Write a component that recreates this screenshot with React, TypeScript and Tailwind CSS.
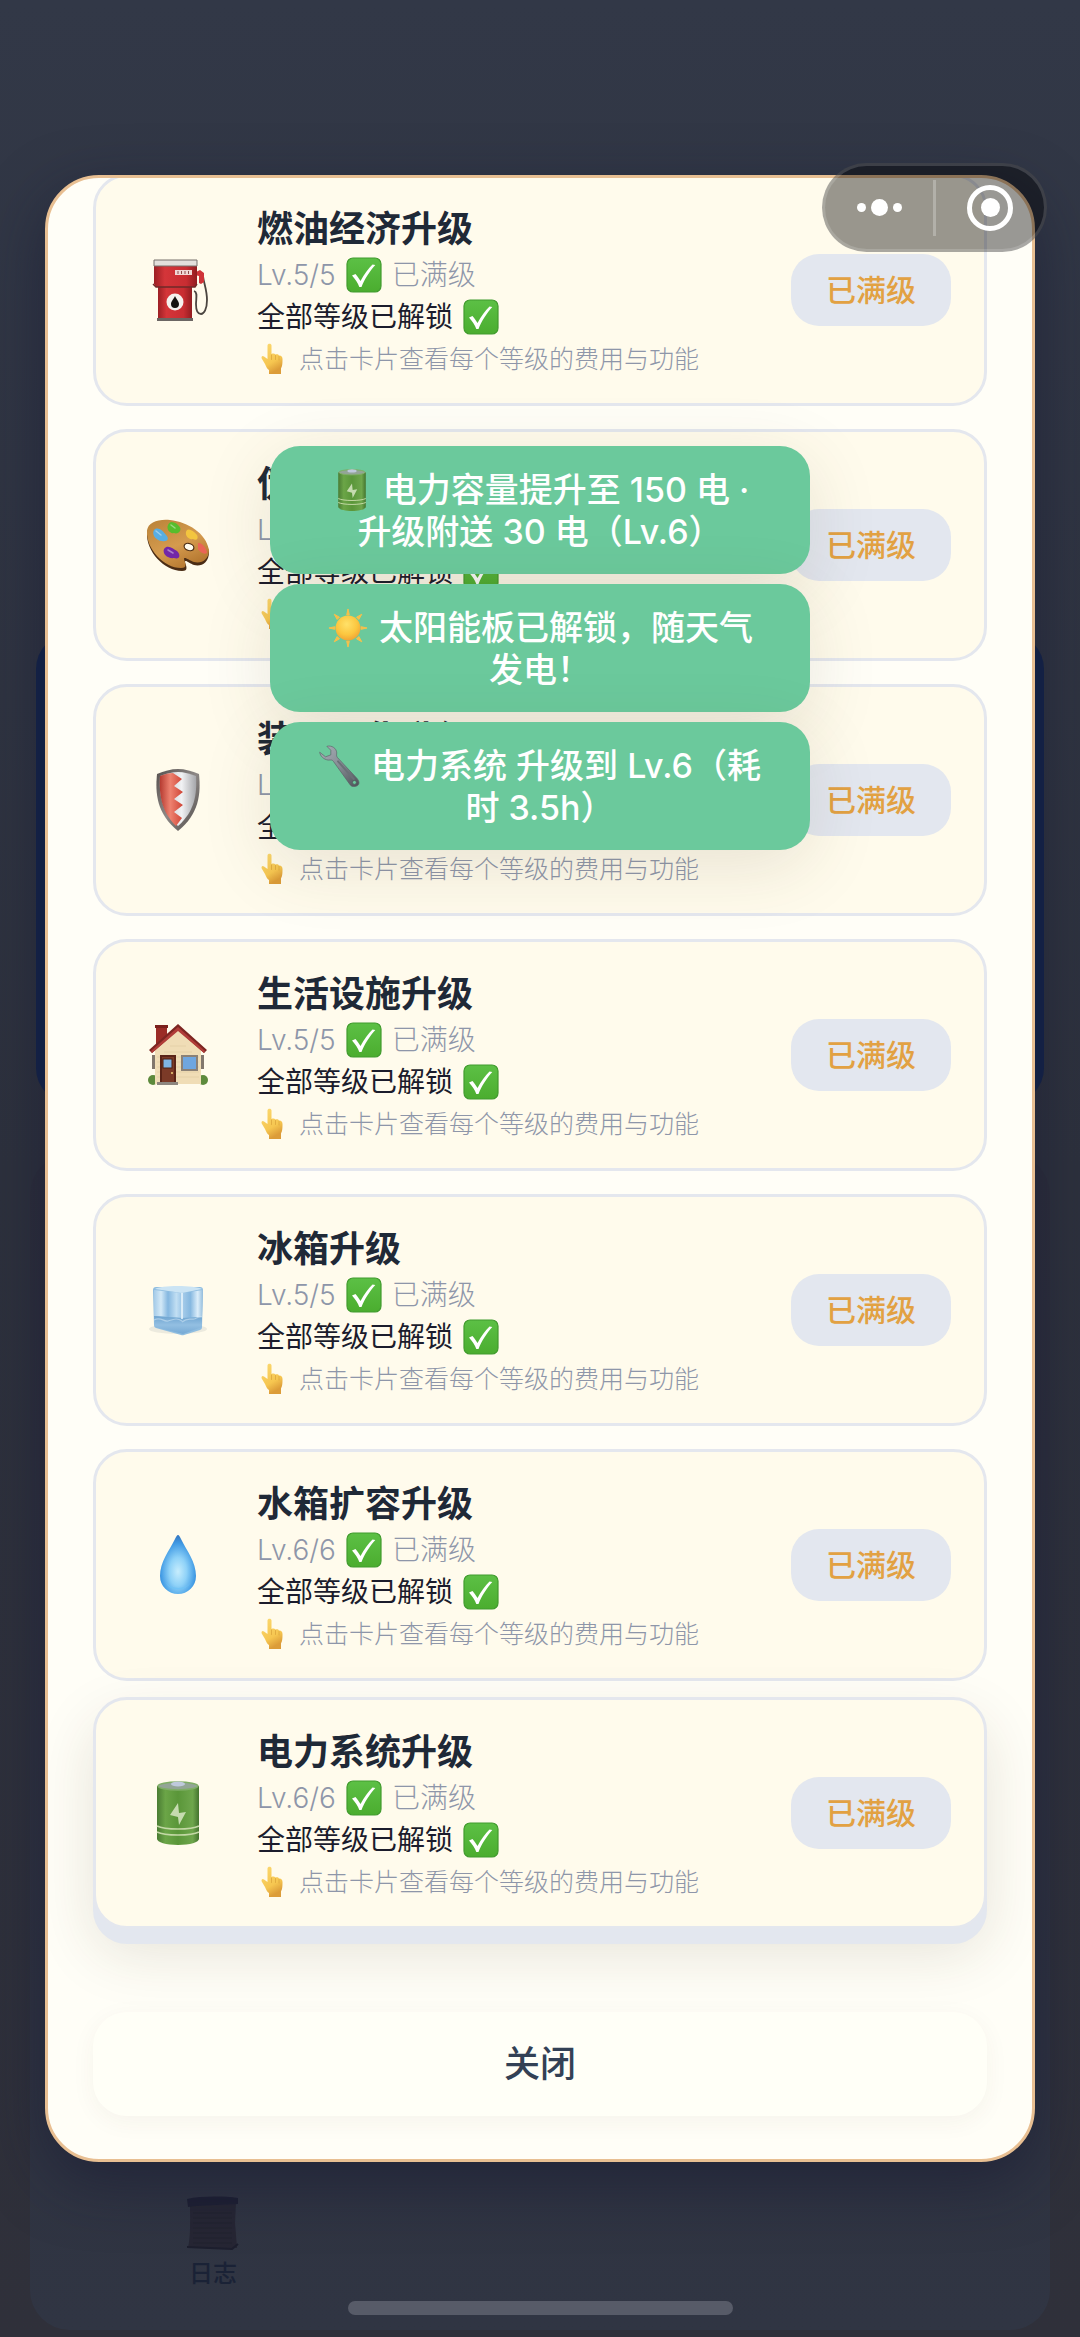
import React from 'react';

type IconProps = { className?: string };

type Upgrade = {
  title: string;
  level: string;
  icon: React.ComponentType<IconProps>;
  pressed?: boolean;
};

type Toast = {
  id: string;
  icon: React.ComponentType<IconProps>;
  lines: [string, string];
};

function FuelIcon({ className }: IconProps) {
  return (
    <svg viewBox="0 0 64 64" className={className} aria-hidden="true">
      <defs>
        <linearGradient id="fuelBody" x1="0" x2="1">
          <stop offset="0" stopColor="#9c1f24" />
          <stop offset="0.25" stopColor="#d43539" />
          <stop offset="0.75" stopColor="#c82d32" />
          <stop offset="1" stopColor="#921c20" />
        </linearGradient>
      </defs>
      <path d="M48 33c4 1 2 8 2 13 0 6 2 10 5 10s6-5 6-14c0-10-3-16-4-24" fill="none" stroke="#4b4540" strokeWidth="1.8" />
      <path d="M50 14l4-2 4 3v9l-3 2-2-1v-7l-4-1z" fill="#cf3338" />
      <rect x="12" y="28" width="34" height="32" fill="url(#fuelBody)" />
      <path d="M8 2h43v24l-2 3H10l-2-3z" fill="url(#fuelBody)" />
      <path d="M8 2h43v6H8z" fill="#e3dfdb" stroke="#77716d" strokeWidth="1" />
      <path d="M7 26l3 3h39l2-3" fill="none" stroke="#6f2a28" strokeWidth="1.4" />
      <rect x="29" y="12" width="17" height="5" fill="#f0d8d6" />
      <path d="M32 13v3M35.500 13v3M39 13v3M42.500 13v3" stroke="#8d4b4a" strokeWidth="1" />
      <path d="M11 60h36v3H11z" fill="#6b6663" />
      <circle cx="29" cy="44" r="8.500" fill="#f5f1ee" />
      <path d="M29 38c1 3 4 5 4 8a4 4 0 0 1-8 0c0-3 3-5 4-8z" fill="#15110f" />
    </svg>
  );
}

function PaletteIcon({ className }: IconProps) {
  return (
    <svg viewBox="0 0 64 64" className={className} aria-hidden="true">
      <defs>
        <linearGradient id="wood" x1="0" y1="0" x2="0.6" y2="1">
          <stop offset="0" stopColor="#b98238" />
          <stop offset="0.6" stopColor="#d59b4e" />
          <stop offset="1" stopColor="#b67931" />
        </linearGradient>
      </defs>
      <path d="M1 20C2 10 12 7 24 8c18 2 36 14 39 31 0 11-8 15-15 13-5-2-9-6-9-3 1 4 4 9-3 9C18 58 0 38 1 20z" fill="#4a2c14" />
      <path d="M1 18C2 9 12 6 24 7c18 2 36 13 39 30 0 10-8 14-15 12-5-2-10-6-10-3 1 4 4 9-3 9C18 55 0 36 1 18z" fill="url(#wood)" />
      <ellipse cx="43" cy="34" rx="5" ry="3.500" transform="rotate(20 43 34)" fill="#fffbec" stroke="#4a2c14" strokeWidth="1.200" />
      <path d="M8 17c4-4 9 1 12 5 4 4 1 7-4 6-5 0-11-6-8-11z" fill="#58aee3" />
      <path d="M22 12c2-6 9-2 11 1 4 4-1 9-5 7-4 1-8-4-6-8z" fill="#57bd2c" />
      <path d="M40 19c1-5 7-2 11 3 2 4-1 6-4 4-4 1-8-3-7-7z" fill="#f3c53f" />
      <path d="M52 30c4-1 9 6 9 10-3 2-7-1-9-4z" fill="#ea6455" />
      <path d="M18 36c4-5 9 0 13 2 4 4 3 9-3 7-6 1-12-4-10-9z" fill="#7227a8" />
      <path d="M10 18l5 4M25 12l4 3M22 37l5 3" stroke="#fff" strokeOpacity="0.4" strokeWidth="1.500" strokeLinecap="round" />
    </svg>
  );
}

function ShieldIcon({ className }: IconProps) {
  return (
    <svg viewBox="0 0 64 64" className={className} aria-hidden="true">
      <defs>
        <linearGradient id="shieldRim" x1="0" y1="0" x2="1" y2="1">
          <stop offset="0" stopColor="#57514f" />
          <stop offset="0.5" stopColor="#8d8886" />
          <stop offset="1" stopColor="#4d4846" />
        </linearGradient>
        <linearGradient id="shieldRed" x1="0" x2="1">
          <stop offset="0" stopColor="#b53a30" />
          <stop offset="0.45" stopColor="#ee8270" />
          <stop offset="1" stopColor="#cf4436" />
        </linearGradient>
        <linearGradient id="shieldSilver" x1="0" x2="1">
          <stop offset="0" stopColor="#b9bbbf" />
          <stop offset="0.6" stopColor="#f1f2f4" />
          <stop offset="1" stopColor="#a5a6aa" />
        </linearGradient>
      </defs>
      <path d="M32 1c7 0 14 2 21 5 2 20 0 40-21 57C11 46 9 26 11 6c7-3 14-5 21-5z" fill="url(#shieldRim)" />
      <path d="M32 4c6 0 12 2 18 4 1 18-1 35-18 50C15 43 13 26 14 8c6-2 12-4 18-4z" fill="url(#shieldSilver)" />
      <path d="M27 5l9 6-8 7 9 6-9 7 9 6-9 7 8 6-6 8C15 43 13 26 14 8c5-2 9-3 13-3z" fill="url(#shieldRed)" />
    </svg>
  );
}

function HouseIcon({ className }: IconProps) {
  return (
    <svg viewBox="0 0 64 64" className={className} aria-hidden="true">
      <circle cx="7" cy="57" r="5" fill="#5d8a3c" />
      <circle cx="57" cy="57" r="5" fill="#5d8a3c" />
      <rect x="10" y="2" width="11" height="20" fill="#9b2c26" />
      <path d="M9 2h13v3H9z" fill="#7b201c" />
      <path d="M9 27L32 5l23 22v34H9z" fill="#f0ddb6" />
      <path d="M11 34h42M11 39h42M11 44h42M11 49h42M11 54h42M18 29h28M24 23h16" stroke="#e2cfa4" strokeWidth="0.800" />
      <path d="M32 1L3 27l3 3L32 7l26 23 3-3z" fill="#7d2521" />
      <path d="M32 4L5 28l1 2L32 8l26 22 1-2z" fill="#b03c38" />
      <rect x="14" y="32" width="16" height="28" fill="#5a2417" />
      <rect x="16" y="34" width="12" height="26" fill="#7b3a27" />
      <rect x="17" y="36" width="9" height="9" fill="#7fb4e4" stroke="#4d2015" strokeWidth="1" />
      <circle cx="26" cy="50" r="1" fill="#f2d27b" />
      <path d="M6 32h3v14H6zM55 32h3v14h-3z" fill="#81776c" />
      <rect x="35" y="32" width="17" height="16" fill="#8b8176" />
      <rect x="37" y="34" width="13" height="12" fill="#6fa6df" />
      <path d="M11 59h21v3H11z" fill="#8d867f" />
    </svg>
  );
}

function IceIcon({ className }: IconProps) {
  return (
    <svg viewBox="0 0 64 64" className={className} aria-hidden="true">
      <defs>
        <linearGradient id="iceL" x1="0" y1="0" x2="1" y2="0">
          <stop offset="0" stopColor="#a5cbe8" />
          <stop offset="0.250" stopColor="#d3e9f7" />
          <stop offset="0.500" stopColor="#84b7e0" />
          <stop offset="0.800" stopColor="#c2dff3" />
          <stop offset="1" stopColor="#9cc6e7" />
        </linearGradient>
        <linearGradient id="iceR" x1="0" y1="0" x2="1" y2="0">
          <stop offset="0" stopColor="#a8cdea" />
          <stop offset="0.400" stopColor="#86b8e0" />
          <stop offset="0.750" stopColor="#dceefa" />
          <stop offset="1" stopColor="#93bcdc" />
        </linearGradient>
        <linearGradient id="iceBase" x1="0" y1="0" x2="0" y2="1">
          <stop offset="0" stopColor="#6ea4d0" />
          <stop offset="0.500" stopColor="#93bfe2" />
          <stop offset="1" stopColor="#75a9d4" />
        </linearGradient>
      </defs>
      <ellipse cx="32" cy="51" rx="29" ry="5" fill="#dad9cf" opacity="0.500" />
      <path d="M10 9h44a3 3 0 0 1 3 3l-1 37a3 3 0 0 1-2 3l-16 5a4 4 0 0 1-3 0L10 50a3 3 0 0 1-2-3L7 12a3 3 0 0 1 3-3z" fill="#8fbde0" />
      <path d="M8 12l28 3v25L8 38z" fill="url(#iceL)" />
      <path d="M36 15l21-3-1 27-20 1z" fill="url(#iceR)" />
      <path d="M8 38l28 2 20-1v10l-19 7L9 49z" fill="url(#iceBase)" />
      <path d="M9 11c5-4 40-4 47 0l-20 4z" fill="#cbe4f4" />
      <path d="M8 42c7-4 9 2 14 1s8-4 14 0M36 44c6-5 9-2 12-3s5-3 8-2" fill="none" stroke="#dceefa" strokeWidth="1.200" opacity="0.500" />
      <path d="M36 15v26" stroke="#edf7fc" strokeWidth="1.500" />
    </svg>
  );
}

function DropIcon({ className }: IconProps) {
  return (
    <svg viewBox="0 0 64 64" className={className} aria-hidden="true">
      <defs>
        <radialGradient id="drop" cx="0.500" cy="0.620" r="0.600">
          <stop offset="0" stopColor="#c7edfd" />
          <stop offset="0.400" stopColor="#8fd2f8" />
          <stop offset="0.800" stopColor="#409ae4" />
          <stop offset="1" stopColor="#3579c4" />
        </radialGradient>
      </defs>
      <path d="M32 2c1 0 2 2 3 4 6 12 15 23 15 37a18 18 0 0 1-36 0C14 29 23 18 29 6c1-2 2-4 3-4z" fill="url(#drop)" />
      <path d="M20 50c5 6 19 7 24 0-3 8-20 9-24 0z" fill="#6ec3f7" opacity="0.700" />
    </svg>
  );
}

function BatteryIcon({ className }: IconProps) {
  return (
    <svg viewBox="0 0 64 64" className={className} aria-hidden="true">
      <defs>
        <linearGradient id="battery" x1="0" x2="1">
          <stop offset="0" stopColor="#4a7c33" />
          <stop offset="0.200" stopColor="#6ba547" />
          <stop offset="0.500" stopColor="#5a9639" />
          <stop offset="0.850" stopColor="#6ea64c" />
          <stop offset="1" stopColor="#44742f" />
        </linearGradient>
      </defs>
      <path d="M11 5h42v53c0 3-9 6-21 6s-21-3-21-6z" fill="url(#battery)" />
      <ellipse cx="32" cy="5" rx="20" ry="4" fill="#93a596" stroke="#7fae66" strokeWidth="1.500" />
      <ellipse cx="32" cy="3" rx="7" ry="2.500" fill="#bfc9dc" />
      <path d="M32 22l1 10 7-1-7 13-1-8-8-2z" fill="#c6dbb0" />
      <path d="M11 45c8 4 34 4 42 0M11 51c8 4 34 4 42 0" fill="none" stroke="#c3d8a5" strokeWidth="1.500" />
    </svg>
  );
}

function SunIcon({ className }: IconProps) {
  return (
    <svg viewBox="0 0 64 64" className={className} aria-hidden="true">
      <defs>
        <radialGradient id="sun" cx="0.450" cy="0.350" r="0.700">
          <stop offset="0" stopColor="#ffe169" />
          <stop offset="0.600" stopColor="#fbc63f" />
          <stop offset="1" stopColor="#ee9e33" />
        </radialGradient>
      </defs>
      <path
        d="M32 3l2 9h-4zM32 61l2-9h-4zM3 32l9-2v4zM61 32l-9-2v4zM11 11l8 4.500-3.500 3.500zM53 11l-8 4.500 3.500 3.500zM11 53l8-4.500-3.500-3.500zM53 53l-8-4.500 3.500-3.500z"
        fill="#f7c04a"
        stroke="#f7c04a"
        strokeWidth="1.500"
        strokeLinejoin="round"
      />
      <circle cx="32" cy="32" r="19" fill="url(#sun)" />
    </svg>
  );
}

function WrenchIcon({ className }: IconProps) {
  return (
    <svg viewBox="0 0 64 64" className={className} aria-hidden="true">
      <defs>
        <linearGradient id="steel" x1="0" y1="0" x2="1" y2="1">
          <stop offset="0" stopColor="#a9b0b8" />
          <stop offset="0.500" stopColor="#858b93" />
          <stop offset="1" stopColor="#4d5157" />
        </linearGradient>
      </defs>
      <path
        d="M12 2c7-2 15 3 15 10 0 3-1 4 1 7l30 32c5 6 3 11-2 12-4 1-7 0-9-3L22 25c-2-3-4-2-8-2-7-1-12-6-13-12l9 7 8-3V8z"
        fill="url(#steel)"
        stroke="#5b6067"
        strokeWidth="1"
      />
      <path d="M29 25l24 27" stroke="#6a7077" strokeWidth="3" strokeLinecap="round" />
      <circle cx="54" cy="57" r="3" fill="#6bc99c" stroke="#4b4f55" strokeWidth="1" />
    </svg>
  );
}

function CheckIcon() {
  return (
    <svg viewBox="0 0 36 36" className="size-9 shrink-0" role="img" aria-label="已完成">
      <defs>
        <linearGradient id="check" x1="0" y1="0" x2="0" y2="1">
          <stop offset="0" stopColor="#5cc045" />
          <stop offset="1" stopColor="#4bad2f" />
        </linearGradient>
      </defs>
      <rect x="1" y="1" width="34" height="34" rx="6" fill="url(#check)" stroke="#419b2e" strokeWidth="1.200" />
      <path d="M6 18.500l3.500-1.500c2 2.500 3.500 4.500 5 7C18 17.500 22 12 26.500 7.500l2.800.500C24 14 18.500 22 15.500 30h-2.200C12 26 9 22 6 18.500z" fill="#fff" />
    </svg>
  );
}

function FingerIcon() {
  return (
    <svg viewBox="0 0 22 32" className="ml-1 h-8 w-[22px] shrink-0" aria-hidden="true">
      <defs>
        <linearGradient id="finger" x1="0" y1="0" x2="0.400" y2="1">
          <stop offset="0" stopColor="#fbd971" />
          <stop offset="0.700" stopColor="#f6c650" />
          <stop offset="1" stopColor="#dc9c38" />
        </linearGradient>
      </defs>
      <path
        d="M6.500 2.500C6.500 0 10.500 0 10.500 2.500V11c1.500-.800 3-.600 4 .500 1.500-.600 3-.200 3.500 1 2-.300 3.500 1 3.500 3.500 0 5-.200 7-1.500 9.500V31H8v-4c-2-1-3-4-4-6L.700 15.500C0 13.500 1.500 12 3 13.500L6.500 16z"
        fill="url(#finger)"
      />
      <path d="M10.500 12v4.500M14.500 12.500v4M18 13.500v3.500" stroke="#dca63c" strokeWidth="0.800" strokeLinecap="round" />
    </svg>
  );
}

function ScrollIcon({ className }: IconProps) {
  return (
    <svg viewBox="0 0 54 56" className={className} aria-hidden="true">
      <path d="M4 5h46l-1 22 2 25H2c3-14 2-30 2-47z" fill="#262634" />
      <path d="M1 3c14-3 36-3 51-1v6c-16 1-36 1-50 3z" fill="#1e2033" />
      <path d="M7 17h39M7 22h39M7 27h39M7 32h39M7 37h39M7 42h39M7 47h39" stroke="#232431" strokeWidth="1.500" />
      <path d="M1 51l45 2 6-5" fill="none" stroke="#1d1f2e" strokeWidth="2" />
    </svg>
  );
}

const upgrades: Upgrade[] = [
  { title: '燃油经济升级', level: 'Lv.5/5', icon: FuelIcon },
  { title: '伪装系统升级', level: 'Lv.5/5', icon: PaletteIcon },
  { title: '装甲强化升级', level: 'Lv.5/5', icon: ShieldIcon },
  { title: '生活设施升级', level: 'Lv.5/5', icon: HouseIcon },
  { title: '冰箱升级', level: 'Lv.5/5', icon: IceIcon },
  { title: '水箱扩容升级', level: 'Lv.6/6', icon: DropIcon },
  { title: '电力系统升级', level: 'Lv.6/6', icon: BatteryIcon, pressed: true },
];

const toasts: Toast[] = [
  { id: 'capacity', icon: BatteryIcon, lines: ['电力容量提升至 150 电 ·', '升级附送 30 电（Lv.6）'] },
  { id: 'solar', icon: SunIcon, lines: ['太阳能板已解锁，随天气', '发电！'] },
  { id: 'power', icon: WrenchIcon, lines: ['电力系统 升级到 Lv.6（耗', '时 3.5h）'] },
];

function UpgradeCard({ upgrade }: { upgrade: Upgrade }) {
  const Icon = upgrade.icon;
  return (
    <li
      className={`flex items-center gap-[30px] rounded-[34px] border-[3px] border-[#e4e7ee] bg-[#fffbec] px-[33px] ${
        upgrade.pressed ? '-mt-[7px] shadow-[0_15px_0_#e3e7ef,0_24px_60px_rgba(60,50,20,0.13)]' : ''
      }`}
    >
      <div className="flex w-[98px] shrink-0 justify-center">
        <Icon className="size-16" />
      </div>
      <div className="min-w-0 flex-1 pt-[27px] pb-[23px]">
        <h3 className="text-[36px] leading-[50px] font-semibold text-[#1f2937]">{upgrade.title}</h3>
        <p className="flex items-center gap-[10px] text-[28px] leading-[42px] font-light text-[#8e96a9]">
          <span>{upgrade.level}</span>
          <CheckIcon />
          <span>已满级</span>
        </p>
        <p className="flex items-center gap-[10px] text-[28px] leading-[42px] text-[#1b1c2c]">
          <span>全部等级已解锁</span>
          <CheckIcon />
        </p>
        <p className="flex items-center gap-4 text-[25px] leading-[42px] font-light whitespace-nowrap text-[#8e96a9]">
          <FingerIcon />
          <span>点击卡片查看每个等级的费用与功能</span>
        </p>
      </div>
      <button type="button" className="h-[72px] w-40 shrink-0 rounded-[28px] bg-[#e3e7ef] text-[30px] font-medium text-[#e2a142]">
        已满级
      </button>
    </li>
  );
}

function ToastMessage({ toast }: { toast: Toast }) {
  const Icon = toast.icon;
  return (
    <div className="rounded-[30px] bg-[#6bc99c] pt-[23px] pb-[21px] text-center text-[34px] leading-[42px] font-medium text-white shadow-[0_16px_70px_rgba(80,60,40,0.13)]">
      <div className="flex items-center justify-center gap-[10px]">
        <Icon className="size-[42px]" />
        <span>{toast.lines[0]}</span>
      </div>
      <div>{toast.lines[1]}</div>
    </div>
  );
}

export default function App() {
  return (
    <div className="relative min-h-screen overflow-hidden bg-[#2d303c] font-[Inter,'Noto_Sans_CJK_SC',sans-serif]">
      {/* Dimmed page behind the dialog */}
      <div className="flex min-h-screen flex-col bg-gradient-to-b from-[#323847] via-[#2d313d] to-[#2f303a] px-[30px] pt-[633px] pb-[7px]">
        <div className="mx-[6px] h-[471px] rounded-[36px] bg-[#14244a]" />
        <div className="mt-[50px] flex flex-1 flex-col justify-end rounded-[40px] bg-gradient-to-b from-[#2c2e3b] to-[#303543] px-[146px] pb-[38px]">
          <button type="button" className="flex w-[74px] flex-col items-center text-[24px] leading-[36px] font-medium text-[#1a2236]">
            <ScrollIcon className="mb-1 h-14 w-[54px]" />
            <span>日志</span>
          </button>
        </div>
      </div>

      <div className="absolute inset-0 px-[45px] pt-[175px]">
        <section
          role="dialog"
          aria-label="升级"
          className="overflow-hidden rounded-[54px] border-[3px] border-[#e8bf92] bg-[#fffef7] px-[45px] pb-[43px] shadow-[0_20px_60px_rgba(20,22,48,0.5)]"
        >
          <ul className="-mt-1 flex flex-col gap-[23px]">
            {upgrades.map((upgrade) => (
              <UpgradeCard key={upgrade.title} upgrade={upgrade} />
            ))}
          </ul>
          <button
            type="button"
            className="mt-[83px] h-[104px] w-full rounded-[34px] bg-[#fffff7] text-[36px] font-medium text-[#334155] shadow-[0_6px_24px_rgba(80,60,30,0.05)]"
          >
            关闭
          </button>
        </section>
      </div>

      <div role="status" className="absolute inset-x-1/4 top-[446px] flex flex-col gap-[10px]">
        {toasts.map((toast) => (
          <ToastMessage key={toast.id} toast={toast} />
        ))}
      </div>

      {/* Mini program capsule */}
      <div className="absolute top-[163px] right-[33px] flex h-[89px] w-[225px] items-center rounded-full border-[3px] border-white/15 bg-black/40">
        <button type="button" aria-label="更多" className="flex flex-1 items-center justify-center gap-[5px]">
          <span className="size-[9px] rounded-full bg-white" />
          <span className="size-[17px] rounded-full bg-white" />
          <span className="size-[9px] rounded-full bg-white" />
        </button>
        <span className="h-14 w-[3px] bg-white/25" />
        <button type="button" aria-label="关闭小程序" className="flex flex-1 items-center justify-center">
          <span className="flex size-[46px] items-center justify-center rounded-full border-[5px] border-white">
            <span className="size-[19px] rounded-full bg-white" />
          </span>
        </button>
      </div>

      {/* Home indicator */}
      <div className="absolute inset-x-0 bottom-[22px] mx-auto h-[14px] w-[385px] rounded-full bg-[#575b68]" />
    </div>
  );
}
